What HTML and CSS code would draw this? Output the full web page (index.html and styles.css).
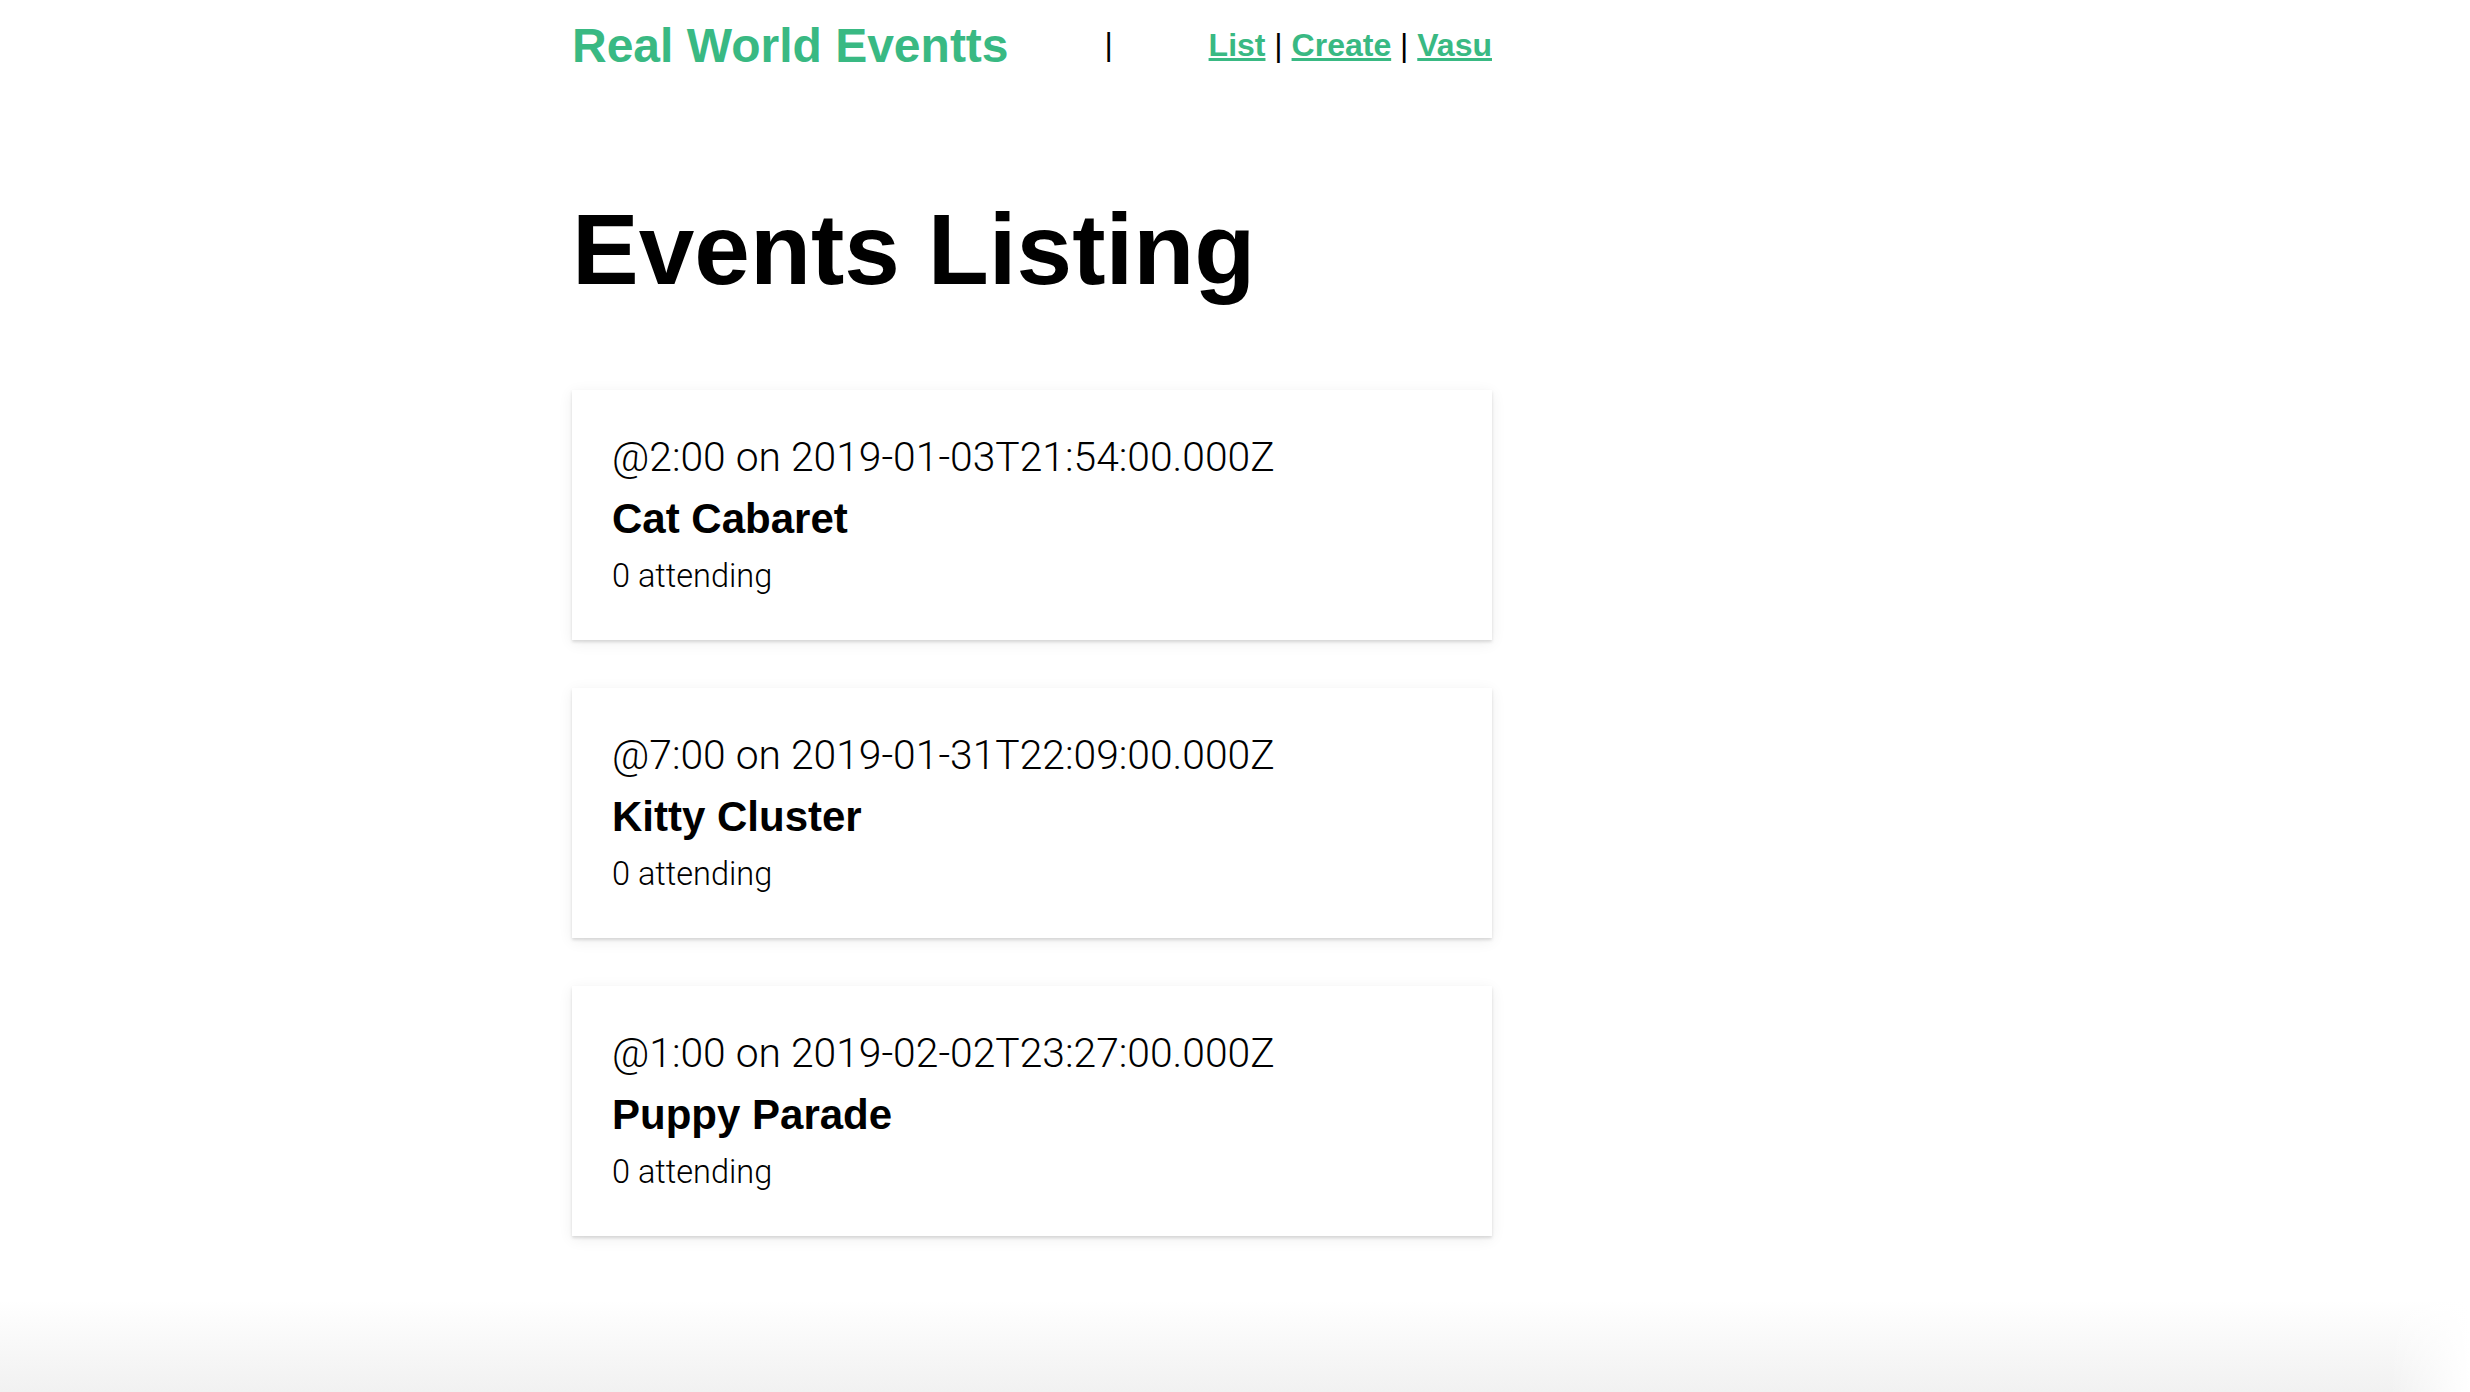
FILE: index.html
```html
<!DOCTYPE html>
<html lang="en">
<head>
<meta charset="utf-8">
<title>Real World Eventts</title>
<link rel="stylesheet" href="styles.css">
</head>
<body>
<div class="app">
  <header class="site-header">
    <a class="brand">Real World Eventts</a>
    <span class="sep">|</span>
    <nav class="nav">
      <a class="nav-link" href="#">List</a> <span class="sep">|</span> <a class="nav-link" href="#">Create</a> <span class="sep">|</span> <a class="nav-link" href="#">Vasu</a>
    </nav>
  </header>

  <h1 class="page-title">Events Listing</h1>

  <div class="event-card">
    <div class="event-time">@2:00 on 2019-01-03T21:54:00.000Z</div>
    <h4 class="event-title">Cat Cabaret</h4>
    <div class="event-attending">0 attending</div>
  </div>

  <div class="event-card">
    <div class="event-time">@7:00 on 2019-01-31T22:09:00.000Z</div>
    <h4 class="event-title">Kitty Cluster</h4>
    <div class="event-attending">0 attending</div>
  </div>

  <div class="event-card">
    <div class="event-time">@1:00 on 2019-02-02T23:27:00.000Z</div>
    <h4 class="event-title">Puppy Parade</h4>
    <div class="event-attending">0 attending</div>
  </div>
</div>
</body>
</html>
```

FILE: styles.css
```css
html {
  min-height: 100%;
  background:
    linear-gradient(to left, #ffffff 0, rgba(255, 255, 255, 0) 80px),
    linear-gradient(to bottom, #ffffff 0, #ffffff 1300px, #f1f1f1 1392px);
  background-repeat: no-repeat;
  background-size: 100% 1392px;
}

body {
  margin: 0;
  font-family: "Liberation Sans", Arial, Helvetica, sans-serif;
  color: #000;
}

.app {
  width: 920px;
  margin-left: 572px;
}

.site-header {
  display: flex;
  justify-content: space-between;
  align-items: flex-start;
  padding-top: 22px;
}

.brand {
  font-size: 48px;
  line-height: 48px;
  font-weight: 700;
  color: #39b983;
  text-decoration: none;
}

.site-header > .sep {
  margin-top: 6px;
  font-size: 32px;
  line-height: 32px;
}

.sep {
  color: #000;
  font-weight: 400;
}

.nav {
  margin-top: 7px;
  font-size: 32px;
  line-height: 32px;
}

.nav-link {
  color: #39b983;
  font-weight: 700;
  text-decoration: underline;
}

.page-title {
  margin: 129px 0 91px;
  font-size: 100px;
  line-height: 100px;
  font-weight: 700;
}

.event-card {
  box-sizing: border-box;
  height: 250px;
  padding: 43px 40px 44px;
  margin-bottom: 48px;
  background: #fff;
  box-shadow: 0 2px 3px rgba(0, 0, 0, 0.13), 0 3px 14px rgba(0, 0, 0, 0.07);
}

.event-time {
  font-family: Roboto, "Liberation Sans", sans-serif;
  font-weight: 300;
  font-size: 40.8px;
  line-height: 48px;
  color: #000;
}

.event-title {
  margin: 12px 0 0;
  font-size: 42px;
  line-height: 52px;
  font-weight: 700;
}

.event-attending {
  margin-top: 11px;
  font-family: Roboto, "Liberation Sans", sans-serif;
  font-weight: 300;
  font-size: 32.5px;
  line-height: 40px;
  color: #000;
}
```
